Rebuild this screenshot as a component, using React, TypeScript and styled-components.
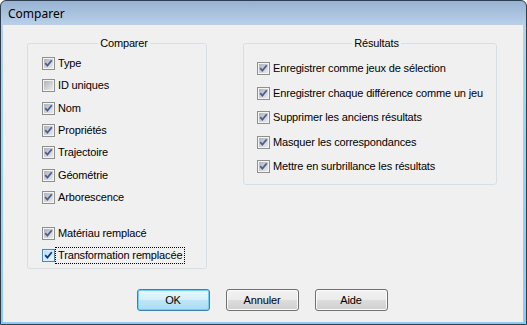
import React from "react";
import styled, { createGlobalStyle, css } from "styled-components";

const Global = createGlobalStyle`
  html, body { margin: 0; padding: 0; background: #ffffff; }
  body { font-family: "Liberation Sans", Arial, sans-serif; }
  #root { width: 527px; height: 325px; }
`;

const Window = styled.div`
  box-sizing: border-box;
  width: 527px;
  height: 325px;
  display: flex;
  flex-direction: column;
  border: 1px solid #2f3e4f;
  border-radius: 6px 6px 0 0;
  overflow: hidden;
  background: linear-gradient(#97b3d1 0px, #b9d0e9 24px, #a9d3ee 60px, #8fcbec 100%);
`;

const TitleBar = styled.div`
  height: 24px;
  flex: none;
  display: flex;
  align-items: center;
  padding-left: 7px;
  font-family: "Noto Sans", "Open Sans", sans-serif;
  font-size: 12px;
  color: #000;
`;

const Client = styled.div`
  flex: 1;
  margin: 0 3px 2px 2px;
  background: #f0f0f0;
  display: flex;
  flex-direction: column;
  font-size: 11px;
  letter-spacing: -0.15px;
  color: #000;
`;

const GroupsRow = styled.div`
  display: flex;
  align-items: flex-start;
  padding: 12px 0 0 24px;
  gap: 36px;
`;

const GroupBox = styled.fieldset<{ $w: number; $h: number; $pt: number; $pl: number }>`
  box-sizing: border-box;
  margin: 0;
  width: ${(p) => p.$w}px;
  height: ${(p) => p.$h}px;
  border: 1px solid #d5dfe5;
  border-radius: 3px;
  padding: ${(p) => p.$pt}px 0 0 ${(p) => p.$pl}px;
  display: flex;
  flex-direction: column;
  min-width: 0;
`;

const Legend = styled.legend`
  margin: 0 auto;
  padding: 0 2px;
  line-height: 13px;
  font-size: 11px;
`;

const List = styled.div<{ $gap: number }>`
  display: flex;
  flex-direction: column;
  gap: ${(p) => p.$gap}px;
`;

const Row = styled.label<{ $extra?: number }>`
  display: flex;
  align-items: center;
  height: 13px;
  gap: 3px;
  white-space: nowrap;
  margin-top: ${(p) => p.$extra ?? 0}px;
`;

const Box = styled.span<{ $focus?: boolean }>`
  box-sizing: border-box;
  width: 13px;
  height: 13px;
  flex: none;
  border: 1px solid #8e8f8f;
  padding: 1px;
  background: #f4f4f4;
  display: flex;
  ${(p) =>
    p.$focus &&
    css`
      border-color: #5586a3;
      background: #deeff9;
    `}
`;

const BoxInner = styled.span<{ $focus?: boolean }>`
  flex: 1;
  display: flex;
  background: ${(p) =>
    p.$focus
      ? "linear-gradient(135deg, #b1dffd, #e9f7fe)"
      : "linear-gradient(135deg, #aeb3b9, #ebebeb)"};
`;

const Label = styled.span<{ $focus?: boolean }>`
  line-height: 13px;
  padding: 0 1px;
  margin-left: -1px;
  ${(p) =>
    p.$focus &&
    css`
      outline: 1px dotted #000;
      outline-offset: 1px;
    `}
`;

const ButtonsRow = styled.div`
  display: flex;
  justify-content: center;
  gap: 16px;
  margin-top: 20px;
  padding-right: 2px;
`;

const Button = styled.button<{ $default?: boolean }>`
  box-sizing: border-box;
  width: 73px;
  height: 22px;
  margin: 0;
  padding: 0;
  font-family: "Liberation Sans", Arial, sans-serif;
  font-size: 11px;
  letter-spacing: -0.15px;
  color: #000;
  border: 1px solid #707070;
  border-radius: 3px;
  background: linear-gradient(#f2f2f2 0%, #ebebeb 50%, #dddddd 50%, #cfcfcf 100%);
  box-shadow: inset 0 0 0 1px #fbfbfb;
  ${(p) =>
    p.$default &&
    css`
      border-color: #3c7fb1;
      background: linear-gradient(#e8f6fd 0%, #d6effb 50%, #bfe6f8 50%, #aadbf3 100%);
      box-shadow: inset 0 0 0 1px #6fd0f3;
    `}
`;

function Check({ checked, focus }: { checked: boolean; focus?: boolean }) {
  return (
    <Box $focus={focus}>
      <BoxInner $focus={focus}>
        {checked && (
          <svg width="9" height="9" viewBox="0 0 9 9">
            <path
              d="M1.2 4.2 L3.4 6.6 L7.8 1.2"
              fill="none"
              stroke={focus ? "#1c3386" : "#4b5f96"}
              strokeWidth="1.8"
            />
          </svg>
        )}
      </BoxInner>
    </Box>
  );
}

type Item = { label: string; checked: boolean; extra?: number; focus?: boolean };

const leftItems: Item[] = [
  { label: "Type", checked: true },
  { label: "ID uniques", checked: false },
  { label: "Nom", checked: true },
  { label: "Propriétés", checked: true },
  { label: "Trajectoire", checked: true },
  { label: "Géométrie", checked: true },
  { label: "Arborescence", checked: true },
  { label: "Matériau remplacé", checked: true, extra: 13.7 },
  { label: "Transformation remplacée", checked: true, focus: true },
];

const rightItems: Item[] = [
  { label: "Enregistrer comme jeux de sélection", checked: true },
  { label: "Enregistrer chaque différence comme un jeu", checked: true },
  { label: "Supprimer les anciens résultats", checked: true },
  { label: "Masquer les correspondances", checked: true },
  { label: "Mettre en surbrillance les résultats", checked: true },
];

function Items({ items, gap }: { items: Item[]; gap: number }) {
  return (
    <List $gap={gap}>
      {items.map((it) => (
        <Row key={it.label} $extra={it.extra}>
          <Check checked={it.checked} focus={it.focus} />
          <Label $focus={it.focus}>{it.label}</Label>
        </Row>
      ))}
    </List>
  );
}

export default function App() {
  return (
    <>
      <Global />
      <Window>
        <TitleBar>Comparer</TitleBar>
        <Client>
          <GroupsRow>
            <GroupBox $w={180} $h={232} $pt={7} $pl={14}>
              <Legend>Comparer</Legend>
              <Items items={leftItems} gap={9.33} />
            </GroupBox>
            <GroupBox $w={254} $h={148} $pt={12} $pl={13}>
              <Legend>Résultats</Legend>
              <Items items={rightItems} gap={11.5} />
            </GroupBox>
          </GroupsRow>
          <ButtonsRow>
            <Button $default>OK</Button>
            <Button>Annuler</Button>
            <Button>Aide</Button>
          </ButtonsRow>
        </Client>
      </Window>
    </>
  );
}
